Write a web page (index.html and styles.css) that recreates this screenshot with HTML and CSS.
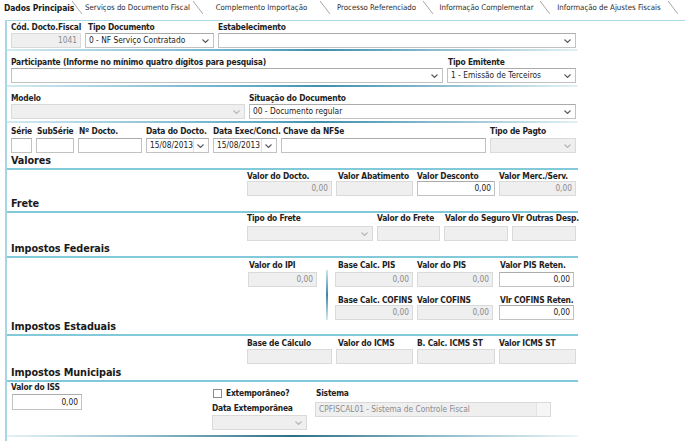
FILE: index.html
```
<!DOCTYPE html>
<html lang="pt">
<head>
<meta charset="utf-8">
<title>Dados Principais</title>
<link rel="stylesheet" href="styles.css">
</head>
<body>
<div class="tabs">
  <div class="tab active">Dados Principais</div>
  <div class="tab t2">Serviços do Documento Fiscal</div>
  <div class="tab t3">Complemento Importação</div>
  <div class="tab t4">Processo Referenciado</div>
  <div class="tab t5">Informação Complementar</div>
  <div class="tab t6">Informação de Ajustes Fiscais</div>
  <div class="tab tend"></div>
</div>

<div class="panel">
  <div class="row r1">
    <div class="f w-cod"><div class="lbl">Cód. Docto.Fiscal</div><div class="inp dis right">1041</div></div>
    <div class="f w-tipo"><div class="lbl">Tipo Documento</div><div class="inp sel"><span>0 - NF Serviço Contratado</span><svg class="chev" viewBox="0 0 7 4" width="7" height="4"><path d="M0.5 0.5L3.5 3.5L6.5 0.5"/></svg></div></div>
    <div class="f w-estab"><div class="lbl">Estabelecimento</div><div class="inp sel"><span></span><svg class="chev" viewBox="0 0 7 4" width="7" height="4"><path d="M0.5 0.5L3.5 3.5L6.5 0.5"/></svg></div></div>
  </div>
  <div class="sep"></div>

  <div class="row r2">
    <div class="f w-part"><div class="lbl">Participante (Informe no mínimo quatro dígitos para pesquisa)</div><div class="inp sel"><span></span><svg class="chev" viewBox="0 0 7 4" width="7" height="4"><path d="M0.5 0.5L3.5 3.5L6.5 0.5"/></svg></div></div>
    <div class="f w-emit"><div class="lbl">Tipo Emitente</div><div class="inp sel"><span>1 - Emissão de Terceiros</span><svg class="chev" viewBox="0 0 7 4" width="7" height="4"><path d="M0.5 0.5L3.5 3.5L6.5 0.5"/></svg></div></div>
  </div>
  <div class="sep"></div>

  <div class="row r3">
    <div class="f w-mod"><div class="lbl">Modelo</div><div class="inp sel dis"><span></span><svg class="chev" viewBox="0 0 7 4" width="7" height="4"><path d="M0.5 0.5L3.5 3.5L6.5 0.5"/></svg></div></div>
    <div class="f w-sit"><div class="lbl">Situação do Documento</div><div class="inp sel"><span>00 - Documento regular</span><svg class="chev" viewBox="0 0 7 4" width="7" height="4"><path d="M0.5 0.5L3.5 3.5L6.5 0.5"/></svg></div></div>
  </div>
  <div class="sep"></div>

  <div class="row r4">
    <div class="f w-serie"><div class="lbl">Série</div><div class="inp"></div></div>
    <div class="f w-sub"><div class="lbl">SubSérie</div><div class="inp"></div></div>
    <div class="f w-num"><div class="lbl">Nº Docto.</div><div class="inp"></div></div>
    <div class="f w-data"><div class="lbl">Data do Docto.</div><div class="inp date"><span>15/08/2013</span><span class="btn"><svg class="chev" viewBox="0 0 7 4" width="7" height="4"><path d="M0.5 0.5L3.5 3.5L6.5 0.5"/></svg></span></div></div>
    <div class="f w-exec"><div class="lbl">Data Exec/Concl.</div><div class="inp date"><span>15/08/2013</span><span class="btn"><svg class="chev" viewBox="0 0 7 4" width="7" height="4"><path d="M0.5 0.5L3.5 3.5L6.5 0.5"/></svg></span></div></div>
    <div class="f w-chave"><div class="lbl">Chave da NFSe</div><div class="inp"></div></div>
    <div class="f w-pag"><div class="lbl">Tipo de Pagto</div><div class="inp sel dis"><span></span><svg class="chev" viewBox="0 0 7 4" width="7" height="4"><path d="M0.5 0.5L3.5 3.5L6.5 0.5"/></svg></div></div>
  </div>

  <div class="head h-val">Valores</div>
  <div class="row right4 r-val">
    <div class="f w-a"><div class="lbl">Valor do Docto.</div><div class="inp dis right">0,00</div></div>
    <div class="f w-b"><div class="lbl">Valor Abatimento</div><div class="inp dis"></div></div>
    <div class="f w-c"><div class="lbl">Valor Desconto</div><div class="inp right dark">0,00</div></div>
    <div class="f w-d"><div class="lbl">Valor Merc./Serv.</div><div class="inp dis right">0,00</div></div>
  </div>

  <div class="head h-fre">Frete</div>
  <div class="row right4 r-fre">
    <div class="f w-tf"><div class="lbl">Tipo do Frete</div><div class="inp sel dis"><span></span><svg class="chev" viewBox="0 0 7 4" width="7" height="4"><path d="M0.5 0.5L3.5 3.5L6.5 0.5"/></svg></div></div>
    <div class="f w-vf"><div class="lbl">Valor do Frete</div><div class="inp dis"></div></div>
    <div class="f w-vs"><div class="lbl">Valor do Seguro</div><div class="inp dis"></div></div>
    <div class="f w-vo"><div class="lbl">Vlr Outras Desp.</div><div class="inp dis"></div></div>
  </div>

  <div class="head h-fed">Impostos Federais</div>
  <div class="fed">
    <div class="f w-ipi"><div class="lbl">Valor do IPI</div><div class="inp dis right">0,00</div></div>
    <div class="vsep"></div>
    <div class="fedgrid">
      <div class="f"><div class="lbl ind">Base Calc. PIS</div><div class="inp dis right">0,00</div></div>
      <div class="f"><div class="lbl">Valor do PIS</div><div class="inp dis right">0,00</div></div>
      <div class="f"><div class="lbl">Valor PIS Reten.</div><div class="inp right dark">0,00</div></div>
      <div class="f"><div class="lbl ind">Base Calc. COFINS</div><div class="inp dis right">0,00</div></div>
      <div class="f"><div class="lbl">Valor COFINS</div><div class="inp dis right">0,00</div></div>
      <div class="f"><div class="lbl">Vlr COFINS Reten.</div><div class="inp right dark">0,00</div></div>
    </div>
  </div>

  <div class="head h-est">Impostos Estaduais</div>
  <div class="row right4 r-est">
    <div class="f w-a"><div class="lbl">Base de Cálculo</div><div class="inp dis"></div></div>
    <div class="f w-b"><div class="lbl">Valor do ICMS</div><div class="inp dis"></div></div>
    <div class="f w-c"><div class="lbl">B. Calc. ICMS ST</div><div class="inp dis"></div></div>
    <div class="f w-d"><div class="lbl">Valor ICMS ST</div><div class="inp dis"></div></div>
  </div>

  <div class="head h-mun">Impostos Municipais</div>
  <div class="mun">
    <div class="f w-iss"><div class="lbl">Valor do ISS</div><div class="inp right dark tall">0,00</div></div>
    <div class="f w-ext">
      <div class="chk"><span class="box"></span><span class="lbl">Extemporâneo?</span></div>
      <div class="lbl ext-l">Data Extemporânea</div>
      <div class="inp sel dis"><span></span><svg class="chev" viewBox="0 0 7 4" width="7" height="4"><path d="M0.5 0.5L3.5 3.5L6.5 0.5"/></svg></div>
    </div>
    <div class="f w-sis"><div class="lbl">Sistema</div><div class="inp dis sis"><span>CPFISCAL01 - Sistema de Controle Fiscal</span><span class="sbtn"></span></div></div>
  </div>
  <div class="sep bottom"></div>
</div>
</body>
</html>
```

FILE: styles.css
```
* { box-sizing: border-box; }
body {
  margin: 0;
  width: 685px;
  height: 441px;
  overflow: hidden;
  background: #fff;
  font-family: "DejaVu Sans Condensed", "DejaVu Sans", sans-serif;
  font-size: 8.3px;
  color: #1c1c1c;
}

/* tabs */
.tabs { display: flex; height: 15px; }
.tab {
  position: relative;
  display: flex;
  align-items: center;
  justify-content: center;
  height: 15px;
  padding-left: 10px;
  color: #2a2a2a;
  white-space: nowrap;
  font-size: 7.8px;
}
.tab::before {
  content: "";
  position: absolute;
  left: 0;
  top: 1px;
  width: 10px;
  height: 13px;
  background: linear-gradient(to top right, transparent calc(50% - 0.8px), #a8a8a8 50%, transparent calc(50% + 0.8px));
}
.tab.active { width: 72px; padding-left: 4px; justify-content: flex-start; font-weight: bold; font-size: 8.5px; letter-spacing: -0.1px; color: #1a1a1a; }
.tab.active::before { display: none; }
.t2 { width: 121px; }
.t3 { width: 127px; }
.t4 { width: 103px; }
.t5 { width: 117px; }
.t6 { width: 128px; }
.tend { flex: 1; }

/* panel */
.panel {
  margin: 5px 0 0 5px;
  border-top: 1px solid #a8dbe6;
  border-left: 2px solid #a6d7e4;
  height: 421px;
}
.row { display: flex; gap: 4px; padding-left: 4px; }
.f { display: flex; flex-direction: column; }
.lbl {
  font-weight: bold;
  font-size: 8.4px;
  letter-spacing: -0.2px;
  line-height: 11px;
  height: 11px;
  white-space: nowrap;
  color: #1e1e1e;
}
.inp {
  height: 15px;
  border: 1px solid #c2c2c2;
  border-top-color: #ababab;
  background: #fff;
  padding: 0 3px;
  display: flex;
  align-items: center;
  justify-content: space-between;
  line-height: 13px;
  white-space: nowrap;
  overflow: hidden;
  color: #222;
}
.inp.right { justify-content: flex-end; }
.inp.dis { background: #efefef; border-color: #dadada; color: #8c8c8c; }
.inp.dark { color: #1a1a1a; }
.chev { flex: none; margin-right: 1px; }
.chev path { fill: none; stroke: #5a5a5a; stroke-width: 1.1; }
.dis .chev path { stroke: #b5b5b5; }
.date { padding-right: 0; }
.btn { display: flex; align-items: center; justify-content: center; width: 15px; height: 13px; border-left: 1px solid #dedede; }

.sep {
  height: 2px;
  width: 571px;
  background: linear-gradient(to right, #d3eaf1 0%, #5ea8c4 45%, #3f8fae 55%, #e3f1f5 100%);
}

/* row vertical rhythm */
.r1 { padding-top: 1px; }
.r1 + .sep { margin-top: 1px; }
.r2, .r3 { margin-top: 6px; }
.r2 + .sep, .r3 + .sep { margin-top: 2px; }
.r4 { margin-top: 3px; }
.r4 .inp { margin-top: 1px; }

.w-cod { width: 70px; }
.w-tipo { width: 129px; }
.w-tipo .lbl { padding-left: 3px; }
.w-estab { width: 358px; }
.w-part { width: 432px; }
.w-emit { width: 129px; }
.w-emit .lbl { padding-left: 1px; }
.w-mod { width: 234px; }
.w-sit { width: 327px; }
.w-serie { width: 21px; }
.w-sub { width: 38px; }
.w-sub .lbl { padding-left: 1px; }
.w-num { width: 64px; }
.w-num .lbl { padding-left: 1px; }
.w-data { width: 63px; }
.w-exec { width: 64px; }
.w-chave { width: 205px; }
.w-chave .lbl { padding-left: 2px; }
.w-pag { width: 86px; }

/* headings */
.head {
  width: 571px;
  padding-left: 4px;
  font-weight: bold;
  font-size: 10.8px;
  letter-spacing: -0.1px;
  line-height: 14px;
  height: 16px;
  border-bottom: 2px solid #82c9da;
  color: #1a1a1a;
}
.h-val { margin-top: 1px; }
.h-fre { margin-top: 1px; }
.h-fed { margin-top: 1px; }
.h-est { margin-top: 0; }
.h-mun { margin-top: 2px; }

.right4 { padding-left: 240px; }
.r-val .lbl { height: 10px; line-height: 10px; margin-top: 1px; }
.r-fre .inp { margin-top: 2px; }
.r-est .lbl { margin-top: 2px; }
.w-a { width: 85px; }
.w-b { width: 77px; }
.w-b .lbl { padding-left: 2px; }
.w-c { width: 78px; }
.w-d { width: 77px; }
.w-tf { width: 126px; }
.w-vf { width: 63px; }
.w-vs, .w-vo { width: 64px; }
.w-vs .lbl { padding-left: 1px; }

/* federais */
.fed { display: flex; padding-left: 241px; }
.w-ipi { width: 69px; margin-top: 2px; }
.w-ipi .lbl { padding-left: 1px; }
.w-ipi .inp { margin-top: 1px; }
.vsep {
  width: 2px;
  height: 50px;
  margin: 12px 0 0 9px;
  background: linear-gradient(to bottom, #cfe6ef, #3f86a8 50%, #d9ecf2);
}
.fedgrid {
  margin-left: 7px;
  display: grid;
  grid-template-columns: 78px 76px 77px;
  column-gap: 4px;
}
.fedgrid .f:nth-child(3n) { margin-left: 2px; }
.fedgrid .f:nth-child(3n) .lbl { padding-left: 1px; }
.fedgrid .f:nth-child(-n+3) { margin-top: 2px; }
.fedgrid .f:nth-child(-n+3) .inp { margin-top: 1px; }
.fedgrid .f:nth-child(n+4) { margin-top: 7px; }
.fedgrid .f:nth-child(n+4) .lbl { height: 10px; line-height: 10px; }
.lbl.ind { padding-left: 3px; }

/* municipais */
.mun { display: flex; padding-left: 5px; }
.w-iss { width: 70px; }
.w-iss .lbl { margin-left: -1px; }
.w-iss .inp { margin-top: 1px; }
.inp.tall { height: 16px; }
.w-ext { width: 95px; margin-left: 130px; }
.chk { display: flex; align-items: center; gap: 4px; margin-top: 6px; height: 11px; }
.box { width: 9px; height: 9px; border: 1px solid #8a8a8a; background: #fff; margin-left: 1px; }
.ext-l { margin-top: 4px; }
.w-ext .inp { margin-top: 1px; }
.w-sis { width: 236px; margin-left: 8px; }
.w-sis .lbl { margin-top: 6px; padding-left: 1px; }
.w-sis .inp { margin-top: 3px; padding-right: 0; }
.sbtn { width: 14px; height: 13px; background: #f6f6f6; border-left: 1px solid #e4e4e4; }

.sep.bottom {
  margin-top: 5px;
  background: linear-gradient(to right, #e6f2f6 0%, #8bb9c9 25%, #2f6f86 50%, #8bb9c9 75%, #eef6f8 100%);
}
```
